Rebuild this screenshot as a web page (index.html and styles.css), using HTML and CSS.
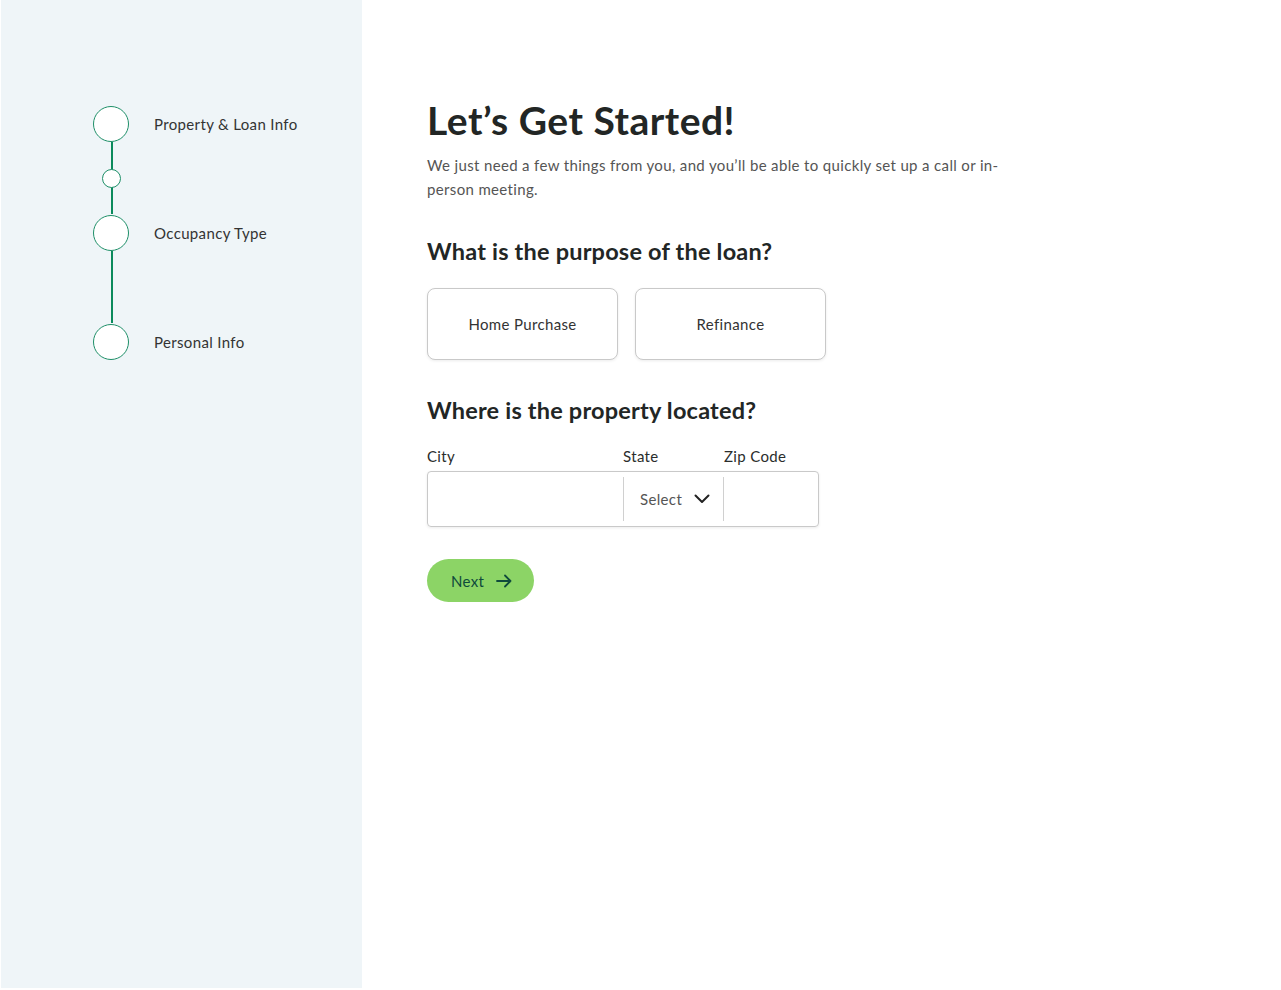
FILE: index.html
```html
<!DOCTYPE html>
<html lang="en">
<head>
    <meta charset="UTF-8">
    <meta name="viewport" content="width=device-width, initial-scale=1.0">
    <title>Let's Get Started</title>
    <link rel="stylesheet" href="styles.css">
</head>
<body>
    <div class="page">
        <aside class="sidebar">
            <div class="steps">
                <div class="step">
                    <span class="step-dot"></span>
                    <span class="step-label">Property &amp; Loan Info</span>
                </div>
                <div class="connector">
                    <span class="sub-dot"></span>
                </div>
                <div class="step">
                    <span class="step-dot"></span>
                    <span class="step-label">Occupancy Type</span>
                </div>
                <div class="connector"></div>
                <div class="step">
                    <span class="step-dot"></span>
                    <span class="step-label">Personal Info</span>
                </div>
            </div>
        </aside>

        <main class="content">
            <h1>Let’s Get Started!</h1>
            <p class="intro">We just need a few things from you, and you’ll be able to quickly set up a call or in-person meeting.</p>

            <h2>What is the purpose of the loan?</h2>
            <div class="choices">
                <button class="choice">Home Purchase</button>
                <button class="choice">Refinance</button>
            </div>

            <h2 class="location-title">Where is the property located?</h2>
            <div class="location">
                <div class="labels">
                    <span class="label-city">City</span>
                    <span class="label-state">State</span>
                    <span class="label-zip">Zip Code</span>
                </div>
                <div class="field-box">
                    <input class="field-city" type="text">
                    <div class="field-state">
                        <span>Select</span>
                        <svg width="16" height="10" viewBox="0 0 16 10" fill="none">
                            <path d="M1.5 1.5L8 8L14.5 1.5" stroke="#222" stroke-width="2" stroke-linecap="round" stroke-linejoin="round"/>
                        </svg>
                    </div>
                    <input class="field-zip" type="text">
                </div>
            </div>

            <button class="btn-next">
                Next
                <svg width="16" height="14" viewBox="0 0 16 14" fill="none">
                    <path d="M1 7H14.5M9 1.5L14.5 7L9 12.5" stroke="#0f4a3c" stroke-width="1.8" stroke-linecap="round" stroke-linejoin="round"/>
                </svg>
            </button>
        </main>
    </div>
</body>
</html>
```

FILE: styles.css
```css
body {
    margin: 0;
    font-family: Lato, "Open Sans", sans-serif;
    color: #2a2d2c;
    background: #fff;
}
.page {
    display: flex;
    min-height: 990px;
}
.sidebar {
    width: 361px;
    height: 988px;
    margin-left: 1px;
    background: #eff5f8;
    flex-shrink: 0;
}
.steps {
    padding: 105px 0 0 92px;
}
.step {
    display: flex;
    align-items: center;
    height: 37px;
}
.step-dot {
    width: 34px;
    height: 34px;
    border: 1.5px solid #1e8f68;
    border-radius: 50%;
    background: #fff;
    flex-shrink: 0;
}
.step-label {
    margin-left: 25px;
    font-size: 15px;
    letter-spacing: 0.35px;
    color: #333;
}
.connector {
    position: relative;
    width: 37px;
    height: 72px;
    display: flex;
    align-items: center;
    justify-content: center;
}
.connector::before {
    content: "";
    position: absolute;
    top: 0;
    bottom: 0;
    left: 17.5px;
    width: 2px;
    background: #0b8a5c;
}
.sub-dot {
    position: relative;
    width: 17px;
    height: 17px;
    border: 1.5px solid #1e8f68;
    border-radius: 50%;
    background: #fff;
}
.content {
    padding: 98px 0 0 65px;
}
h1 {
    margin: 0;
    font-size: 39px;
    font-weight: 700;
    color: #222625;
    line-height: 44px;
    letter-spacing: 0.5px;
}
.intro {
    margin: 11px 0 0;
    max-width: 590px;
    font-size: 15px;
    line-height: 24px;
    letter-spacing: 0.35px;
    color: #555;
}
h2 {
    margin: 35px 0 0;
    font-size: 23.5px;
    font-weight: 700;
    line-height: 30px;
    letter-spacing: 0.2px;
    color: #222625;
}
.choices {
    display: flex;
    gap: 17px;
    margin-top: 22px;
}
.choice {
    width: 191px;
    height: 72px;
    background: #fff;
    border: 1px solid #c9c9c9;
    border-radius: 8px;
    box-shadow: 0 1px 3px rgba(0, 0, 0, 0.08);
    font-family: inherit;
    font-size: 15px;
    letter-spacing: 0.35px;
    color: #333;
    cursor: pointer;
}
.location-title {
    margin-top: 35px;
}
.location {
    margin-top: 22px;
    width: 392px;
}
.labels {
    display: flex;
    font-size: 15px;
    letter-spacing: 0.35px;
    color: #2a2d2c;
    line-height: 18px;
}
.label-city {
    width: 196px;
}
.label-state {
    width: 101px;
}
.field-box {
    display: flex;
    align-items: center;
    margin-top: 6px;
    height: 54px;
    border: 1px solid #c9c9c9;
    border-radius: 4px;
    box-shadow: 0 1px 3px rgba(0, 0, 0, 0.08);
}
.field-box input {
    border: none;
    outline: none;
    height: 100%;
    padding: 0 12px;
    font-family: inherit;
    font-size: 15px;
    background: transparent;
    box-sizing: border-box;
}
.field-city {
    width: 195px;
}
.field-state {
    display: flex;
    align-items: center;
    gap: 12px;
    width: 101px;
    height: 44px;
    box-sizing: border-box;
    padding-left: 16px;
    border-left: 1px solid #d0d0d0;
    border-right: 1px solid #d0d0d0;
    font-size: 15px;
    letter-spacing: 0.35px;
    color: #555;
}
.field-zip {
    flex: 1;
    min-width: 0;
}
.btn-next {
    display: flex;
    align-items: center;
    gap: 12px;
    margin-top: 32px;
    height: 43px;
    padding: 0 22px 0 24px;
    border: none;
    border-radius: 22px;
    background: #8cd466;
    color: #0f4a3c;
    font-family: inherit;
    font-size: 15px;
    letter-spacing: 0.35px;
    cursor: pointer;
}
```
